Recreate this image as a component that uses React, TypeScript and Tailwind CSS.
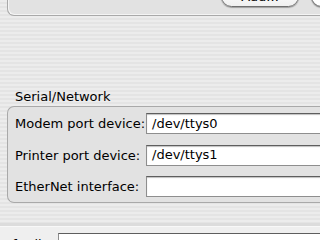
import React from 'react'

// ── Aqua-ish field row ────────────────────────────────────────────────────────

function FieldRow({ label, value }: { label: string; value?: string }) {
  return (
    <div className="flex items-center h-[21px]">
      <span className="w-[131px] shrink-0 text-[13px] leading-none text-black whitespace-nowrap">{label}</span>
      <div className="flex-1 h-[21px] bg-white border border-[#8e8e8e] border-t-[#5e5e5e] shadow-[inset_0_1px_1px_rgba(0,0,0,0.25)] flex items-center pl-[5px] text-[13px] text-black">
        {value}
      </div>
    </div>
  )
}

export default function App() {
  return (
    <div
      className="w-[320px] h-[240px] overflow-hidden bg-[image:repeating-linear-gradient(180deg,#ececec_0px,#ececec_2px,#e4e4e4_2px,#e4e4e4_4px)]"
      style={{ fontFamily: '"Lucida Grande", "DejaVu Sans", sans-serif' }}
    >
      {/* top panel, cut off by the window */}
      <div className="-mt-[25px] ml-[7px] w-[340px] h-[41px] rounded-bl-[7px] border-l border-b border-[#a9a9a9] bg-[#e2e2e2] shadow-[inset_1px_-1px_0_#f4f4f4] flex items-start gap-[12px] pt-[11px] pl-[213px]">
        <div className="w-[78px] h-[21px] shrink-0 rounded-full border border-[#6f6f6f] bg-[linear-gradient(#ffffff,#f0f0f0)] shadow-[0_1px_1px_rgba(0,0,0,0.3)] flex items-center justify-center text-[13px]">
          Add...
        </div>
        <div className="w-[40px] h-[21px] shrink-0 rounded-full border border-[#6f6f6f] bg-white shadow-[0_1px_1px_rgba(0,0,0,0.3)]" />
      </div>

      {/* Serial/Network group */}
      <div className="mt-[73px] pl-[15px] text-[13px] leading-[16px] text-black">Serial/Network</div>
      <div className="mt-[1px] ml-[7px] w-[340px] h-[97px] rounded-l-[7px] border-l border-t border-b border-[#a9a9a9] bg-[#e2e2e2] pl-[7px] pt-[6px] flex flex-col gap-[10.5px]">
        <FieldRow label="Modem port device:" value="/dev/ttys0" />
        <FieldRow label="Printer port device:" value="/dev/ttys1" />
        <FieldRow label="EtherNet interface:" />
      </div>

      {/* lower section */}
      <div className="mt-[20px] h-[3px] bg-[#dcdcdc]" />
      <div className="h-[20px] w-[330px] bg-[#efefef] border-t border-[#f8f8f8] flex items-start pt-[6px]">
        <div className="w-[58px] shrink-0 flex justify-end overflow-visible">
          <span className="pr-[4px] text-[13px] leading-[16px] mt-[4px] whitespace-nowrap">Prefs File:</span>
        </div>
        <div className="flex-1 h-[21px] bg-white border border-[#8e8e8e] border-t-[#5e5e5e]" />
      </div>
    </div>
  )
}
